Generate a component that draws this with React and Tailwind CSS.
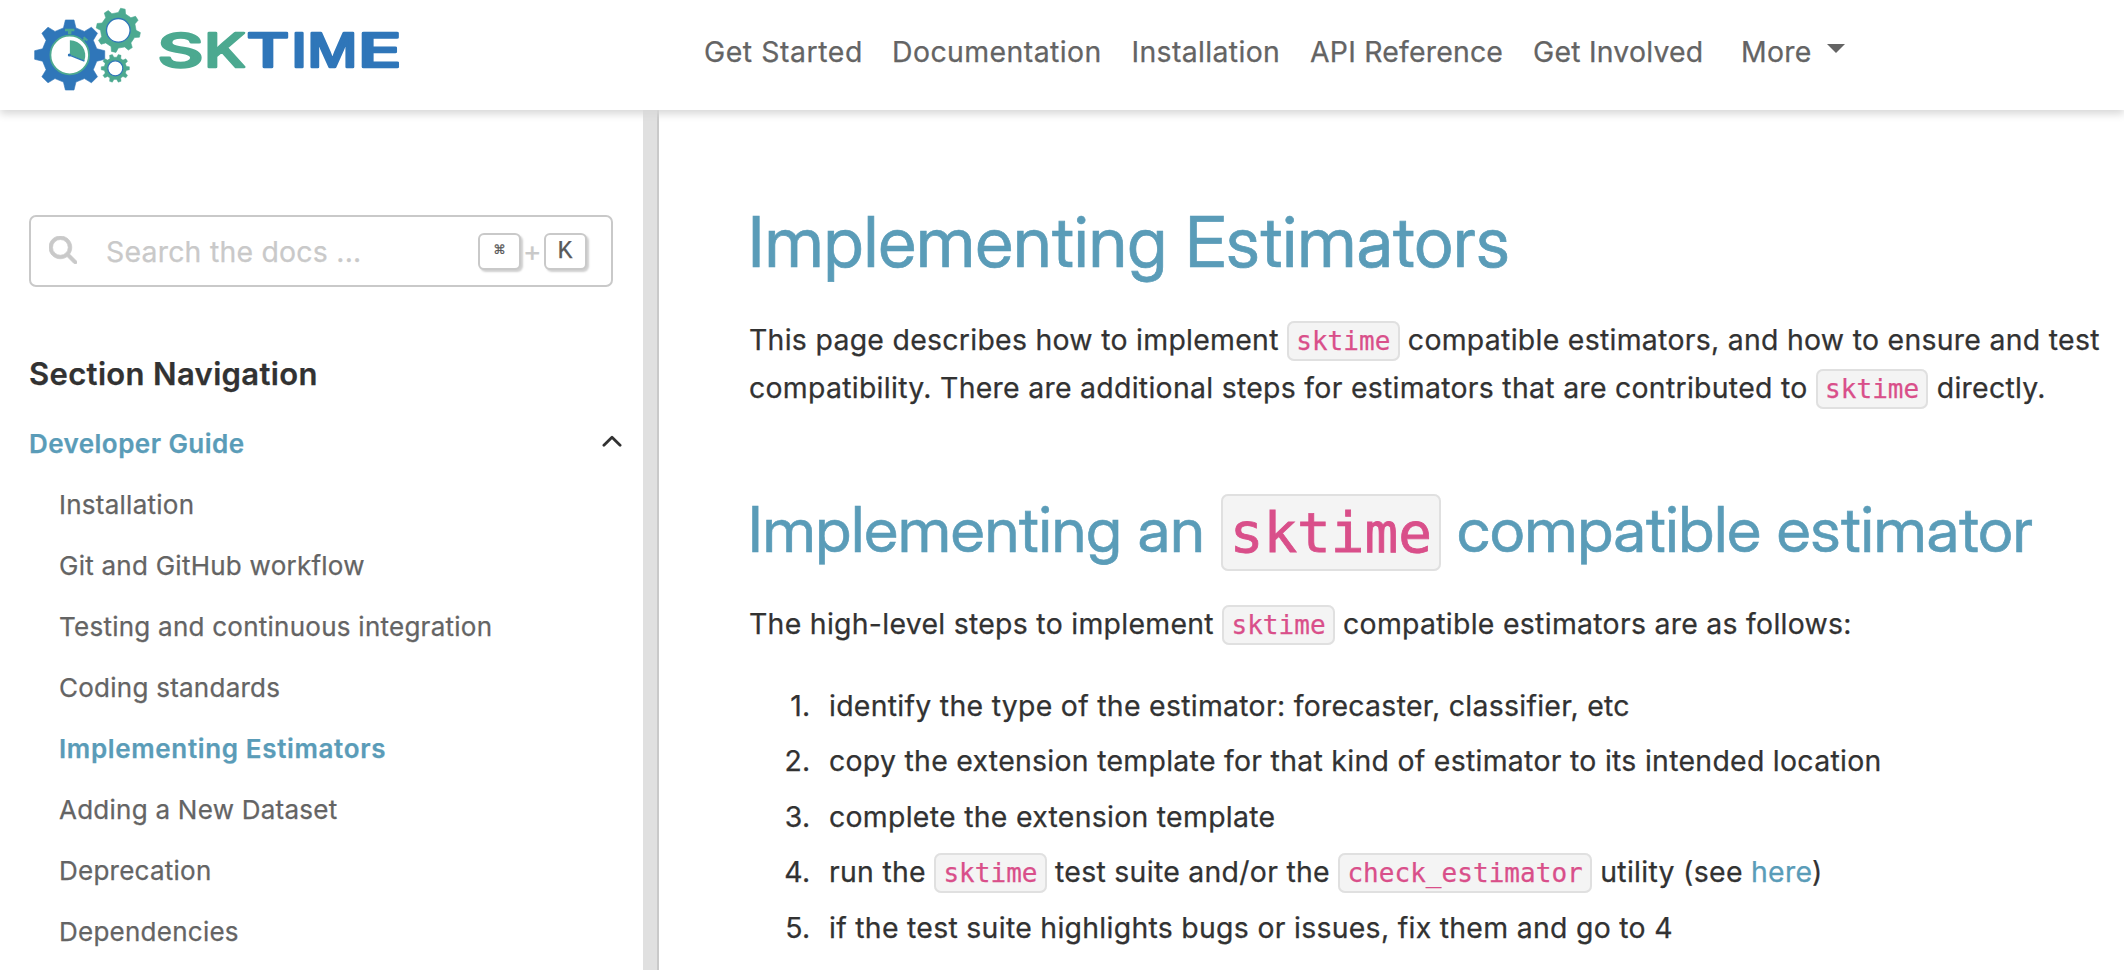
import React from "react";

const NAV = [
  ["Get Started", "w-[188px] tracking-[0.56px]"],
  ["Documentation", "w-[239.5px] tracking-[0.44px]"],
  ["Installation", "w-[178.5px] tracking-[0.36px]"],
  ["API Reference", "w-[223px] tracking-[0.22px]"],
  ["Get Involved", "w-[208px] tracking-[0.22px]"],
];

const SECTIONS = [
  "Installation",
  "Git and GitHub workflow",
  "Testing and continuous integration",
  "Coding standards",
  "Implementing Estimators",
  "Adding a New Dataset",
  "Deprecation",
  "Dependencies",
];

// Closed outline of a cog: n trapezoidal teeth, first one `turn` degrees clockwise from the top.
function gear(cx, cy, outer, root, n, turn, tip, base) {
  const points = [];
  for (let i = 0; i < n; i++) {
    const a = turn + (360 / n) * i;
    for (const [r, d] of [[root, -base], [outer, -tip], [outer, tip], [root, base]]) {
      const t = ((a + d) * Math.PI) / 180;
      points.push(`${(cx + r * Math.sin(t)).toFixed(2)} ${(cy - r * Math.cos(t)).toFixed(2)}`);
    }
  }
  return `M${points.join("L")}Z`;
}

// Letter, left edge, drawn width, colour, side bearing and ink width at the font size used.
const LETTERS = [
  ["S", 158.5, 44, "#4ca990", 1.9, 26.2],
  ["K", 207, 40, "#4ca990", 3.3, 28.4],
  ["T", 247, 42, "#2f76b9", 1.6, 27.2],
  ["I", 294, 10, "#2f76b9", 3.3, 5.9],
  ["M", 310, 45, "#2f76b9", 3.3, 35.8],
  ["E", 361, 39, "#2f76b9", 3.3, 22.4],
];

function Logo() {
  return (
    <svg width="420" height="110" viewBox="0 0 420 110" className="shrink-0">
      <path d={gear(69.7, 55, 35.3, 27.8, 8, 0, 7, 13)} fill="#2f76b9" stroke="#2f76b9" strokeWidth="0.6" strokeLinejoin="round" />
      <circle cx="69.7" cy="55" r="19.3" fill="#fff" stroke="#4ca990" strokeWidth="1.8" />
      <path d="M65 28.700h9.400v2.600h-3v3h-3.400v-3H65z" fill="#4ca990" />
      <path d="M83.600 37.200l3.800 3.400M85 38.600l-1.600 1.800" stroke="#4ca990" strokeWidth="2" />
      <path d="M69.900 55V40.300A15.300 15.300 0 0 1 84.300 61z" fill="#4ca990" />
      <path d="M68.200 54.600l16.200 6.600" stroke="#2f76b9" strokeWidth="1.4" />
      <circle cx="69.4" cy="55" r="1.6" fill="#2f76b9" />
      <path d={gear(118.3, 30.3, 22.2, 17.8, 8, 12, 6, 12)} fill="#4ca990" stroke="#4ca990" strokeWidth="0.6" strokeLinejoin="round" />
      <circle cx="118.3" cy="30.3" r="11.8" fill="#fff" stroke="#2f76b9" strokeWidth="1.3" />
      <path d={gear(115.3, 68.3, 14.2, 11.2, 10, 18, 6, 11)} fill="#4ca990" stroke="#4ca990" strokeWidth="0.4" strokeLinejoin="round" />
      <circle cx="115.3" cy="68.3" r="7.5" fill="#fff" stroke="#2f76b9" strokeWidth="1.2" />
      {LETTERS.map(([ch, x, w, fill, bearing, ink]) => {
        const sx = w / (ink + 2.4);
        return (
          <text
            key={ch}
            transform={`translate(${x - (bearing - 1.2) * sx} 67.1) scale(${sx} 1)`}
            fill={fill}
            stroke={fill}
            strokeWidth="2.4"
            strokeLinejoin="round"
            className="font-[Inter] text-[46.3px] font-medium"
          >
            {ch}
          </text>
        );
      })}
    </svg>
  );
}

function Code({ children }) {
  return (
    <code className="rounded-[7px] border-2 border-[#e0e0e0] bg-[#f4f4f4] px-[7.2px] py-[3px] font-['DejaVu_Sans_Mono',monospace] text-[26px] leading-none tracking-[0.04px] text-[#d94f8a]">
      {children}
    </code>
  );
}

function Key({ children, className }) {
  return (
    <kbd className={`flex h-[37px] items-center justify-center rounded-[6px] border-2 border-[#c9c9c9] bg-white text-[#5a5a5a] shadow-[2px_2px_2px_#d0d0d0] ${className}`}>
      {children}
    </kbd>
  );
}

function Step({ n, children }) {
  return (
    <li className="flex h-[48px]">
      <span className="w-[61.5px] text-right">{n}.</span>
      <span className="pl-[18.5px]">{children}</span>
    </li>
  );
}

export default function App() {
  return (
    <div className="flex h-[970px] w-[2124px] flex-col overflow-hidden bg-white font-['Inter',sans-serif] text-[#323232] [-webkit-text-stroke-width:0.25px]">
      <header className="z-10 flex h-[110px] shrink-0 bg-white shadow-[0_4px_8px_0_#d8d8d8]">
        <Logo />
        <nav className="flex pt-[31.5px] pl-[284px] text-[28.4px] leading-[40px] whitespace-nowrap text-[#646464]">
          {NAV.map(([label, cls]) => (
            <a key={label} className={cls}>{label}</a>
          ))}
          <a className="flex tracking-[0.3px]">
            More
            <svg width="18" height="9" viewBox="0 0 18 9" className="mt-[12.5px] ml-[15px]">
              <path d="M0 0h18L9 9z" fill="#646464" />
            </svg>
          </a>
        </nav>
      </header>

      <div className="flex min-h-0 flex-1">
        <aside className="w-[643px] shrink-0 pt-[105px] pl-[29px]">
          <div className="flex h-[72px] w-[584px] items-center rounded-[7px] border-2 border-[#c9c9c9] text-[#c9c9c9]">
            <svg width="28" height="28" viewBox="0 0 512 512" className="mb-[3px] ml-[18px]" fill="#c9c9c9" stroke="#c9c9c9" strokeWidth="14">
              <path d="M416 208c0 45.900-14.900 88.300-40 122.700L502.600 457.400c12.500 12.500 12.500 32.800 0 45.300s-32.800 12.500-45.300 0L330.700 376c-34.400 25.200-76.800 40-122.700 40C93.100 416 0 322.900 0 208S93.100 0 208 0S416 93.100 416 208zM208 352a144 144 0 1 0 0-288 144 144 0 1 0 0 288z" />
            </svg>
            <span className="ml-[29px] w-[372px] pt-[2px] text-[28.4px] leading-[40px] tracking-[0.24px]">Search the docs ...</span>
            <Key className="w-[43px] font-['Liberation_Mono',monospace] text-[18px]">⌘</Key>
            <span className="w-[22.5px] text-center text-[28px] leading-[30px]">+</span>
            <Key className="w-[43px] pt-[2px] text-[25px]">K</Key>
          </div>

          <p className="mt-[66.500px] text-[31px] leading-[40px] font-semibold tracking-[0.35px]">Section Navigation</p>

          <div className="mt-[19px] flex items-center text-[26px] leading-[61px] font-semibold tracking-[0.45px] text-[#5a9cb8]">
            <span className="w-[573px]">Developer Guide</span>
            <svg width="20" height="12" viewBox="0 0 20 12" fill="none" stroke="#323232" strokeWidth="2.8" strokeLinecap="round" strokeLinejoin="round" className="mb-[4px]">
              <path d="M1.900 10.300L10 2.200l8.100 8.100" />
            </svg>
          </div>
          <ul className="pl-[30px] text-[26px] leading-[61px] tracking-[0.25px] text-[#646464]">
            {SECTIONS.map((s) => (
              <li key={s} className={s === "Implementing Estimators" ? "font-semibold tracking-[0.65px] text-[#5a9cb8]" : ""}>{s}</li>
            ))}
          </ul>
        </aside>

        <div className="w-[16px] shrink-0 border-r-2 border-[#c9c9c9] bg-[#e0e0e0]" />

        <main className="pt-[90px] pl-[90px] text-[28.4px] leading-[48px] tracking-[0.295px] whitespace-nowrap">
          <h1 className="-ml-px font-['Inter_Display','Inter',sans-serif] text-[70px] leading-[84px] tracking-[0.36px] text-[#5a9cb8] [-webkit-text-stroke-width:0.7px]">Implementing Estimators</h1>
          <p className="mt-[31.5px]">
            This page describes how to implement <Code>sktime</Code> compatible estimators, and how to ensure and test
            <br />
            compatibility. There are additional steps for estimators that are contributed to <Code>sktime</Code> directly.
          </p>
          <h2 className="mt-[79.500px] -ml-px h-[76px] font-['Inter_Display','Inter',sans-serif] text-[63px] leading-[76px] tracking-[0.02px] text-[#5a9cb8] [-webkit-text-stroke-width:0.6px]">
            Implementing an{" "}
            <code className="rounded-[7px] border-2 border-[#e0e0e0] bg-[#f4f4f4] px-[7.2px] py-[4px] font-['DejaVu_Sans_Mono',monospace] text-[56px] leading-none tracking-normal text-[#d94f8a] [-webkit-text-stroke-width:0.8px]">
              sktime
            </code>{" "}
            compatible estimator
          </h2>
          <p className="mt-[32.500px]">
            The high-level steps to implement <Code>sktime</Code> compatible estimators are as follows:
          </p>
          <ol className="mt-[34px] flex flex-col gap-[7.5px]">
            <Step n={1}>identify the type of the estimator: forecaster, classifier, etc</Step>
            <Step n={2}>copy the extension template for that kind of estimator to its intended location</Step>
            <Step n={3}>complete the extension template</Step>
            <Step n={4}>
              run the <Code>sktime</Code> test suite and/or the <Code>check_estimator</Code> utility (see <a className="text-[#5a9cb8]">here</a>)
            </Step>
            <Step n={5}>if the test suite highlights bugs or issues, fix them and go to 4</Step>
          </ol>
        </main>
      </div>
    </div>
  );
}
